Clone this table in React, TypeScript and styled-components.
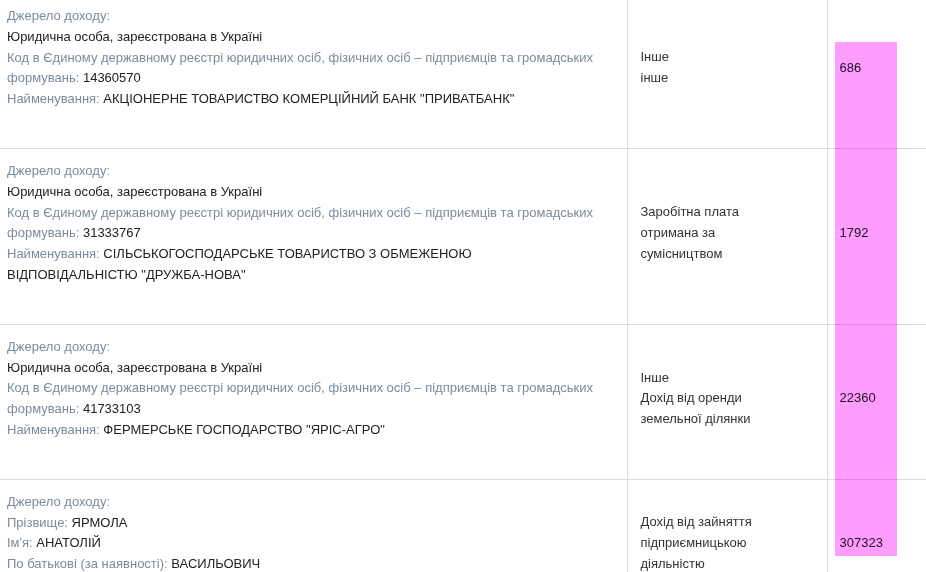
import styled, { createGlobalStyle } from "styled-components";

const GlobalStyle = createGlobalStyle`
  html, body {
    margin: 0;
    padding: 0;
    background: #ffffff;
    overflow: hidden;
  }
  body {
    font-family: "Liberation Sans", Arial, sans-serif;
    font-size: 13px;
    color: #222222;
  }
`

const Wrapper = styled.div`
  position: relative;
  width: 926px;
  height: 572px;
  overflow: hidden;
`

const Table = styled.table`
  margin-top: -6px;
  width: 926px;
  border-collapse: collapse;
  table-layout: fixed;
  line-height: 20.8px;
`

const SourceCell = styled.td`
  width: 627px;
  box-sizing: border-box;
  padding: 12px 29px 38px 7px;
  border-bottom: 1px solid #dddddd;
  vertical-align: top;
`

const TypeCell = styled.td`
  width: 200px;
  box-sizing: border-box;
  padding: 8px 60px 14px 13px;
  border-left: 1px solid #dddddd;
  border-bottom: 1px solid #dddddd;
  vertical-align: middle;
  color: #333333;
`

const AmountCell = styled.td`
  box-sizing: border-box;
  padding: 8px 4px 14px 12px;
  border-left: 1px solid #dddddd;
  border-bottom: 1px solid #dddddd;
  vertical-align: middle;
  color: #222222;
`

const Line = styled.div``

const Label = styled.span`
  color: #7d8b9b;
`

const Marker = styled.div`
  position: absolute;
  left: 835px;
  top: 42px;
  width: 62px;
  height: 514px;
  background: #ff9cff;
  mix-blend-mode: multiply;
  pointer-events: none;
`

type Field = { label?: string; value?: string }

type Row = {
  fields: Field[]
  types: string[]
  amount: string
}

const legal = (code: string, name: string): Field[] => [
  { label: "Джерело доходу:" },
  { value: "Юридична особа, зареєстрована в Україні" },
  { label: "Код в Єдиному державному реєстрі юридичних осіб, фізичних осіб – підприємців та громадських формувань:", value: code },
  { label: "Найменування:", value: name },
]

const rows: Row[] = [
  {
    fields: legal("14360570", "АКЦІОНЕРНЕ ТОВАРИСТВО КОМЕРЦІЙНИЙ БАНК \"ПРИВАТБАНК\""),
    types: ["Інше", "інше"],
    amount: "686",
  },
  {
    fields: legal("31333767", "СІЛЬСЬКОГОСПОДАРСЬКЕ ТОВАРИСТВО З ОБМЕЖЕНОЮ ВІДПОВІДАЛЬНІСТЮ \"ДРУЖБА-НОВА\""),
    types: ["Заробітна плата отримана за сумісництвом"],
    amount: "1792",
  },
  {
    fields: legal("41733103", "ФЕРМЕРСЬКЕ ГОСПОДАРСТВО \"ЯРІС-АГРО\""),
    types: ["Інше", "Дохід від оренди земельної ділянки"],
    amount: "22360",
  },
  {
    fields: [
      { label: "Джерело доходу:" },
      { label: "Прізвище:", value: "ЯРМОЛА" },
      { label: "Ім'я:", value: "АНАТОЛІЙ" },
      { label: "По батькові (за наявності):", value: "ВАСИЛЬОВИЧ" },
    ],
    types: ["Дохід від зайняття підприємницькою діяльністю"],
    amount: "307323",
  },
]

export default function App() {
  return (
    <Wrapper>
      <GlobalStyle />
      <Table>
        <tbody>
          {rows.map((row, i) => (
            <tr key={i}>
              <SourceCell>
                {row.fields.map((f, j) => (
                  <Line key={j}>
                    {f.label && <Label>{f.label}</Label>}
                    {f.label && f.value ? " " : null}
                    {f.value}
                  </Line>
                ))}
              </SourceCell>
              <TypeCell>
                {row.types.map((t, j) => (
                  <Line key={j}>{t}</Line>
                ))}
              </TypeCell>
              <AmountCell>{row.amount}</AmountCell>
            </tr>
          ))}
        </tbody>
      </Table>
      <Marker />
    </Wrapper>
  )
}
